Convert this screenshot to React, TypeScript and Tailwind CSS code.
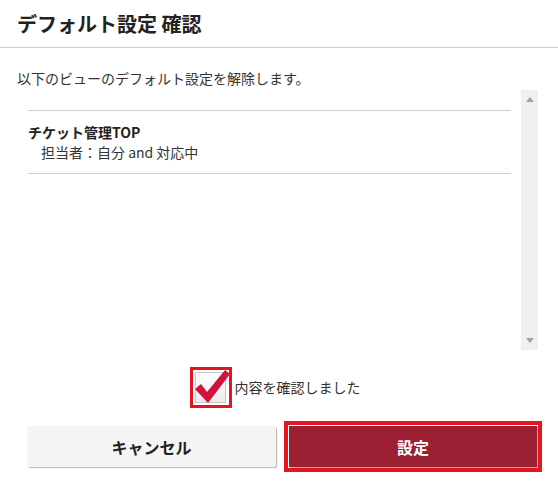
import React from "react";

export default function App() {
  const font = { fontFamily: '"Noto Sans CJK JP", "Noto Sans", sans-serif' };
  return (
    <div className="w-[558px] h-[488px] bg-white text-[#333] relative overflow-hidden" style={font}>
      <div className="h-[48px] border-b border-[#cfcfcf] pl-[17px] flex items-center">
        <h1 className="text-[20px] font-bold text-[#222] leading-none">デフォルト設定 確認</h1>
      </div>
      <p className="pl-[17px] pt-[20px] text-[14px] leading-[20px] text-[#333]">以下のビューのデフォルト設定を解除します。</p>
      <div className="mt-[2px] ml-[28px] mr-[20px] h-[260px] flex gap-[10px]">
        <div className="flex-1 pt-[20px]">
          <div className="border-t border-b border-[#cfcfcf] pt-[11px] pb-[11px]">
            <div className="text-[14px] font-bold leading-[20px] text-[#222]">チケット管理TOP</div>
            <div className="text-[14px] leading-[20px] pl-[13px] text-[#333]">担当者：自分 and 対応中</div>
          </div>
        </div>
        <div className="w-[17px] bg-[#f0f0f0] flex flex-col items-center justify-between py-[7px]">
          <svg width="8" height="5" viewBox="0 0 8 5"><polygon points="4,0 8,5 0,5" fill="#a3a3a3" /></svg>
          <svg width="8" height="5" viewBox="0 0 8 5"><polygon points="0,0 8,0 4,5" fill="#a3a3a3" /></svg>
        </div>
      </div>
      <div className="mt-[17px] flex items-center justify-center pr-[8px]">
        <div className="relative w-[42px] h-[41px] border-[3px] border-[#e5151f] bg-white flex items-center justify-center">
          <div className="w-[31px] h-[31px] border border-[#c8c8c8] bg-gradient-to-b from-white to-[#ececec]" />
          <svg className="absolute left-[-3px] top-[-3px]" width="42" height="41" viewBox="0 0 42 41">
            <polygon points="5,22 11,17 17,25 35,3 40,7 18,36" fill="#d2123c" />
          </svg>
        </div>
        <span className="ml-[3px] text-[14px] text-[#333]">内容を確認しました</span>
      </div>
      <div className="mt-[13px] flex items-center pl-[27px]">
        <button className="w-[249px] h-[41px] bg-[#f5f5f5] rounded-[2px] shadow-[1px_1px_1px_rgba(0,0,0,0.3)] text-[16px] font-bold text-[#222]">キャンセル</button>
        <div className="ml-[8px] border-[4px] border-[#e8141f] p-[1px]">
          <button className="w-[248px] h-[41px] bg-[#9b2033] shadow-[1px_1px_1px_rgba(0,0,0,0.3)] text-[16px] font-bold text-white">設定</button>
        </div>
      </div>
    </div>
  );
}
